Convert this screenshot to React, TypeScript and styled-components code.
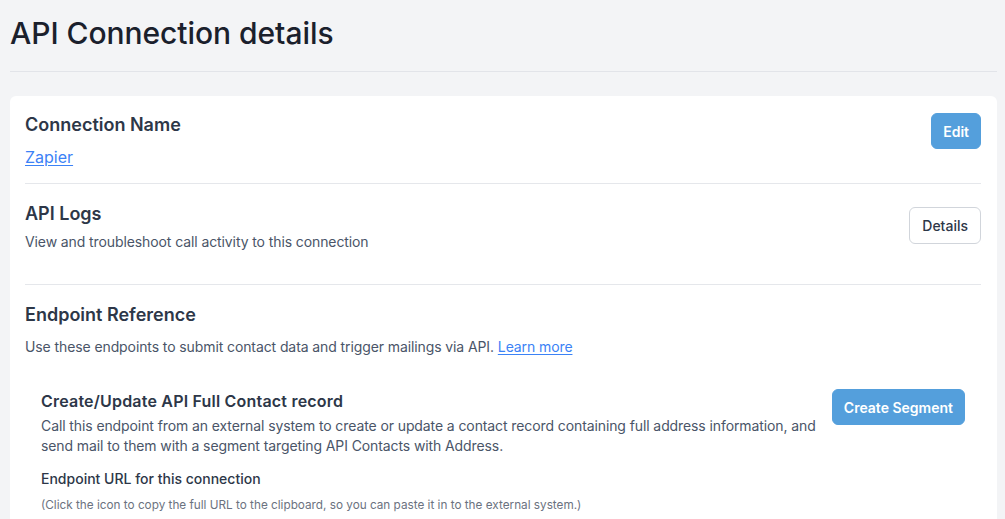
import styled, { createGlobalStyle } from "styled-components";

const GlobalStyle = createGlobalStyle`
  * { box-sizing: border-box; }
  body {
    margin: 0;
    background: #f3f4f6;
    font-family: Inter, "Noto Sans", sans-serif;
    color: #2d3748;
  }
`;

const Page = styled.div`
  padding: 0 8px 0 10px;
`;

const Title = styled.h1`
  margin: 0;
  padding-top: 14px;
  height: 72px;
  font-size: 30px;
  line-height: 38px;
  font-weight: 500;
  color: #1a202c;
  letter-spacing: -0.05px;
  border-bottom: 1px solid #e2e4e9;
`;

const Card = styled.div`
  margin-top: 24px;
  background: #fff;
  border-radius: 6px;
  padding: 0 16px 32px 15px;
`;

const Section = styled.div<{ $pad: string; $last?: boolean }>`
  display: flex;
  justify-content: space-between;
  align-items: flex-start;
  border-bottom: ${(p) => (p.$last ? "none" : "1px solid #e5e7eb")};
  padding: ${(p) => p.$pad};
`;

const Col = styled.div`
  display: flex;
  flex-direction: column;
`;

const Heading = styled.h2`
  margin: 0;
  font-size: 18px;
  line-height: 24px;
  font-weight: 600;
  color: #2d3748;
`;

const Text = styled.p<{ $gap: number }>`
  margin: ${(p) => p.$gap}px 0 0;
  font-size: 14px;
  line-height: 20px;
  color: #4a5568;
  letter-spacing: -0.1px;
`;

const Link = styled.a`
  color: #3b82f6;
  text-decoration: underline;
  text-underline-offset: 2px;
  cursor: pointer;
`;

const NameLink = styled(Link)`
  font-size: 16px;
  line-height: 22px;
  margin-top: 9px;
`;

const Button = styled.button<{ $primary?: boolean; $offset?: number }>`
  font-family: inherit;
  font-size: 14px;
  font-weight: ${(p) => (p.$primary ? 600 : 500)};
  height: ${(p) => (p.$primary ? 36 : 37)}px;
  padding: 0 ${(p) => (p.$primary ? 11 : 12)}px;
  margin-top: ${(p) => p.$offset ?? 0}px;
  border-radius: 6px;
  cursor: pointer;
  color: ${(p) => (p.$primary ? "#fff" : "#2d3748")};
  background: ${(p) => (p.$primary ? "#549fdc" : "#fff")};
  border: 1px solid ${(p) => (p.$primary ? "#549fdc" : "#d1d5db")};
  flex-shrink: 0;
`;

const Endpoint = styled.div`
  display: flex;
  justify-content: space-between;
  align-items: flex-start;
  gap: 12px;
  padding: 32px 16px 0 16px;
`;

const SubHeading = styled.h3`
  margin: 0;
  font-size: 16px;
  line-height: 24px;
  font-weight: 600;
  color: #2d3748;
  letter-spacing: 0.2px;
`;

const Label = styled.div`
  margin-top: 13px;
  font-size: 14px;
  line-height: 20px;
  font-weight: 500;
  color: #2d3748;
`;

const Hint = styled.div`
  margin-top: 8px;
  font-size: 11.75px;
  line-height: 16px;
  color: #6b7280;
`;

export default function App() {
  return (
    <Page>
      <GlobalStyle />
      <Title>API Connection details</Title>
      <Card>
        <Section $pad="17px 0 15px">
          <Col>
            <Heading>Connection Name</Heading>
            <NameLink>Zapier</NameLink>
          </Col>
          <Button $primary>Edit</Button>
        </Section>
        <Section $pad="18px 0 32px">
          <Col>
            <Heading>API Logs</Heading>
            <Text $gap={6}>View and troubleshoot call activity to this connection</Text>
          </Col>
          <Button $offset={5}>Details</Button>
        </Section>
        <Section $last $pad="18px 0 0">
          <Col>
            <Heading>Endpoint Reference</Heading>
            <Text $gap={10}>
              Use these endpoints to submit contact data and trigger mailings via API.{" "}
              <Link>Learn more</Link>
            </Text>
          </Col>
        </Section>
        <Endpoint>
          <Col>
            <SubHeading>Create/Update API Full Contact record</SubHeading>
            <Text $gap={3}>
              Call this endpoint from an external system to create or update a contact record containing full address
              information, and send mail to them with a segment targeting API Contacts with Address.
            </Text>
            <Label>Endpoint URL for this connection</Label>
            <Hint>(Click the icon to copy the full URL to the clipboard, so you can paste it in to the external system.)</Hint>
          </Col>
          <Button $primary>Create Segment</Button>
        </Endpoint>
      </Card>
    </Page>
  );
}
